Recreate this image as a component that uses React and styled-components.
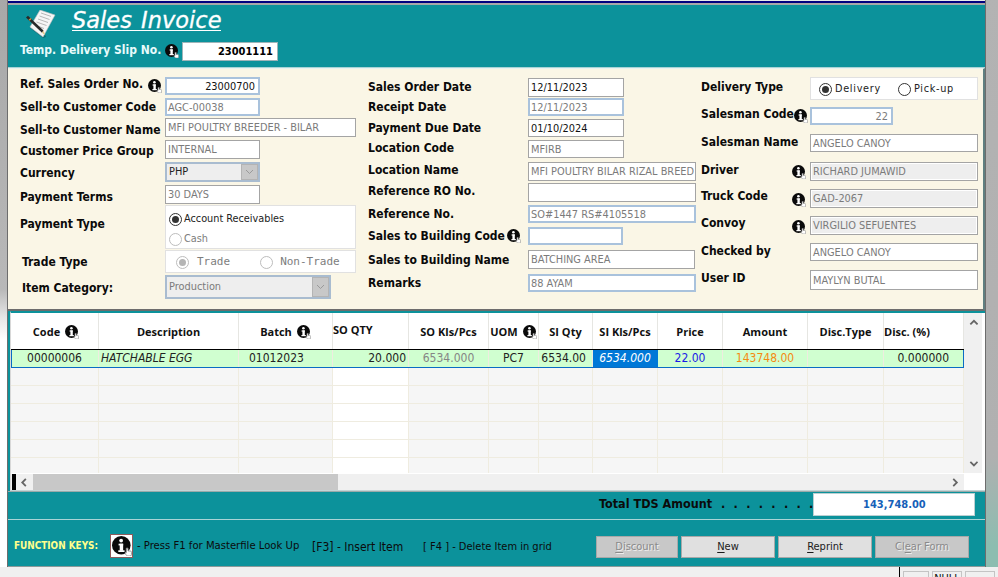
import React from 'react';
import styled, { createGlobalStyle } from 'styled-components';

const TEAL = '#0c929b';
const LABEL_FONT = `"DejaVu Sans Condensed", "DejaVu Sans", sans-serif`;
const TEXT_FONT = `"DejaVu Sans Condensed", "DejaVu Sans", sans-serif`;
const GRID_FONT = `"Open Sans", "Noto Sans", sans-serif`;

const GlobalStyle = createGlobalStyle`
  html, body {
    margin: 0;
    padding: 0;
    background: #f0f0f0;
    overflow: hidden;
  }
  * { box-sizing: border-box; }
`;

const Page = styled.div`
  width: 998px;
  height: 577px;
  display: flex;
  flex-direction: column;
  overflow: hidden;
  font-family: ${TEXT_FONT};
`;

const Desktop = styled.div`
  flex: 0 0 567px;
  display: flex;
  background: linear-gradient(170deg, #b4b4b4 0%, #b0b0b0 85%, #8cbdb0 97%);
`;

const LeftStrip = styled.div`
  flex: 0 0 7px;
  background: linear-gradient(180deg, #a8a8a8 0%, #b8b8b8 51%, #e6e6e6 56%, #ffffff 60%);
`;

const Win = styled.div`
  flex: 0 0 979px;
  display: flex;
  flex-direction: column;
  border-left: 1px solid #6d6d6d;
  border-right: 1px solid #6d6d6d;
  background: ${TEAL};
`;

const TitleStrip = styled.div`
  height: 5px;
  border-top: 1px solid #e8e8e8;
  border-bottom: 2px solid #a8a8a8;
  background: #00007f;
`;

const Header = styled.header`
  height: 63px;
  padding: 0 0 0 12px;
  border-bottom: 1px solid #a9d4d6;
`;

const TitleRow = styled.div`
  display: flex;
  align-items: flex-start;
  height: 36px;
  padding-left: 6px;
`;

const Title = styled.h1`
  margin: 2px 0 0 16px;
  font: oblique 400 22.5px/27px "DejaVu Sans", sans-serif;
  word-spacing: 2px;
  color: #fff;
  -webkit-text-stroke: 0.3px #fff;
  border-bottom: 1px solid #fff;
  height: 24px;
  white-space: nowrap;
`;

const SlipRow = styled.div`
  display: flex;
  align-items: center;
  height: 20px;
`;

const SlipLabel = styled.span`
  font: 700 12px/16px ${LABEL_FONT};
  color: #e8fbfb;
  width: 145px;
  margin-top: -3px;
  white-space: nowrap;
`;

const SlipValue = styled.div`
  width: 96px;
  height: 19px;
  margin-left: 3px;
  padding-right: 4px;
  background: #fff;
  border: 1px solid #9fb4b8;
  font: 700 11px/17px ${LABEL_FONT};
  color: #000;
  text-align: right;
`;

const FormPanel = styled.section`
  height: 243px;
  display: flex;
  padding-left: 12px;
  background: #faf6e6;
  border-top: 1px solid #e8f4f0;
  border-right: 2px solid #5f7f80;
  border-bottom: 2px solid #6d6d6d;
`;

const Column = styled.div`
  flex: 0 0 ${(p) => p.$w}px;
  padding-top: ${(p) => p.$top}px;
  margin-right: ${(p) => p.$gap || 0}px;
`;

const Row = styled.div`
  display: flex;
  align-items: flex-start;
  height: ${(p) => p.$h}px;
`;

const LabelBox = styled.div`
  flex: 0 0 ${(p) => p.$w}px;
  display: flex;
  justify-content: space-between;
  align-items: flex-start;
  padding-left: ${(p) => p.$x || 0}px;
  padding-right: ${(p) => p.$pad || 3}px;
  margin-top: ${(p) => p.$dy + 1}px;
`;

const Label = styled.span`
  font: 700 12px/16px ${LABEL_FONT};
  color: #0a0a0a;
  white-space: nowrap;
`;

const IconSlot = styled.span`
  display: flex;
  margin-top: ${(p) => p.$dy || 0}px;
`;

const Field = styled.div`
  flex: 0 0 ${(p) => p.$w}px;
  height: ${(p) => p.$h}px;
  padding: 1px ${(p) => (p.$right ? 3 : 0)}px 0 1px;
  background: ${(p) => (p.$shade ? '#eeeeee' : '#ffffff')};
  border: 2px solid ${(p) => (p.$blue ? '#a9c2dc' : '#fff')};
  outline: ${(p) => (p.$blue ? 'none' : '1px solid #a4a4a4')};
  outline-offset: -1px;
  font: 400 10.9px/${(p) => p.$h - 5}px ${TEXT_FONT};
  color: ${(p) => (p.$dark ? '#111' : '#7b7b7b')};
  text-align: ${(p) => (p.$right ? 'right' : 'left')};
  overflow: hidden;
  white-space: nowrap;
`;

const Combo = styled.div`
  flex: 0 0 ${(p) => p.$w}px;
  height: ${(p) => p.$h}px;
  display: flex;
  justify-content: space-between;
  padding-left: 2px;
  background: #eeeeee;
  border: 2px solid #a9bcd0;
  font: 400 10.9px/${(p) => p.$h - 4}px ${TEXT_FONT};
  color: ${(p) => (p.$dark ? '#222' : '#7b7b7b')};
`;

const ComboArrow = styled.span`
  width: 17px;
  display: flex;
  align-items: center;
  justify-content: center;
  background: #c8c8c8;
  border: 1px solid #b4b4b4;
`;

const OptionBox = styled.div`
  flex: 0 0 ${(p) => p.$w}px;
  height: ${(p) => p.$h}px;
  display: flex;
  flex-direction: ${(p) => (p.$stack ? 'column' : 'row')};
  padding: ${(p) => p.$pad};
  gap: ${(p) => p.$gap}px;
  background: #fff;
  border: 1px solid #e1e1e1;
`;

const Option = styled.span`
  display: flex;
  align-items: center;
  gap: ${(p) => p.$g || 3}px;
  height: 14px;
  font: 400 ${(p) => (p.$mono ? '11px' : '10.8px')}/14px ${(p) => (p.$mono ? '"DejaVu Sans Mono", monospace' : TEXT_FONT)};
  color: ${(p) => (p.$off ? '#7d7d7d' : '#222')};
  letter-spacing: ${(p) => (p.$spaced ? '0.7px' : '0')};
  white-space: nowrap;
`;

const Radio = styled.span`
  position: relative;
  flex: 0 0 13px;
  width: 13px;
  height: 13px;
  border-radius: 50%;
  background: #fff;
  border: 1px solid ${(p) => (p.$off ? '#bdbdbd' : '#333')};
  &::after {
    content: '';
    display: ${(p) => (p.$on ? 'block' : 'none')};
    position: absolute;
    inset: 2px;
    border-radius: 50%;
    background: ${(p) => (p.$off ? '#b5b5b5' : '#333')};
  }
`;

const GridFrame = styled.section`
  height: 180px;
  margin: 0 0 0 2px;
  width: 975px;
  padding: 0;
  border-top: 2px solid ${TEAL};
  background: #fff;
  display: grid;
  grid-template-columns: 953px 20px;
  grid-template-rows: 160px 17px;
  border-left: 1px solid #d8d8d8;
  border-bottom: 1px solid #c4d4d6;
`;

const GridBody = styled.div`
  overflow: hidden;
`;

const GridRow = styled.div`
  position: relative;
  display: grid;
  grid-template-columns: 88px 140px 94px 76px 80px 50px 54px 65px 65px 85px 76px 80px;
  height: ${(p) => p.$h}px;
  ${(p) => p.$active && `
    border-top: 1px solid #000;
    border-bottom: 1px solid #0a6cc4;
    &::after {
      content: '';
      position: absolute;
      inset: 0;
      border-left: 1px solid #0a6cc4;
      border-right: 1px solid #0a6cc4;
      pointer-events: none;
    }
  `}
`;

const HeadCell = styled.div`
  display: flex;
  align-items: center;
  justify-content: ${(p) => (p.$left ? 'flex-start' : 'center')};
  gap: 5px;
  padding-top: 2px;
  padding-bottom: ${(p) => (p.$raise ? 4 : 0)}px;
  padding-left: ${(p) => (p.$shift ? 3 : 0)}px;
  border-right: 1px solid #e6e6e2;
  font: 700 11px/14px ${GRID_FONT};
  color: #111;
  white-space: nowrap;
`;

const Cell = styled.div`
  padding: 0 ${(p) => p.$padR ?? 2}px 0 ${(p) => p.$pad ?? 2}px;
  border-right: 1px solid ${(p) => (p.$selected ? '#0078d7' : '#efece0')};
  border-bottom: ${(p) => (p.$active ? 'none' : '1px solid #efece0')};
  background: ${(p) => p.$bg};
  font: ${(p) => (p.$italic ? 'italic' : 'normal')} 400 12px/17px ${TEXT_FONT};
  color: ${(p) => p.$color || '#222'};
  text-align: ${(p) => p.$align || 'left'};
  white-space: nowrap;
  overflow: hidden;
`;

const VScroll = styled.div`
  display: flex;
  flex-direction: column;
  justify-content: space-between;
  align-items: center;
  padding: 6px 0 4px;
  width: 18px;
  background: #f0f0f0;
`;

const HScroll = styled.div`
  display: flex;
  align-items: center;
  background: #f0f0f0;
  border-top: 1px solid #fff;
`;

const ScrollMark = styled.span`
  flex: 0 0 4px;
  height: 16px;
  margin-left: 1px;
  background: #000;
`;

const ScrollArrow = styled.span`
  flex: 0 0 17px;
  display: flex;
  justify-content: center;
`;

const ScrollThumb = styled.span`
  flex: 0 0 305px;
  height: 16px;
  background: #c8c8c8;
`;

const ScrollTrack = styled.span`
  flex: 1;
`;

const TotalRow = styled.div`
  height: 29px;
  display: flex;
  align-items: flex-start;
  padding: 1px 0 0 591px;
  border-bottom: 1px solid #a9d4d6;
  border-top: 1px solid #9aa;
`;

const TotalLabel = styled.span`
  flex: 0 0 212px;
  display: flex;
  gap: 9px;
  margin-top: 2px;
  font: 700 12.5px/18px ${LABEL_FONT};
  color: #0b0b0b;
  white-space: pre;
`;

const TotalDots = styled.span`
  word-spacing: 4.4px;
`;

const TotalValue = styled.div`
  width: 162px;
  height: 23px;
  background: #fff;
  border: 1px solid #bcd0d2;
  font: 700 11px/21px ${LABEL_FONT};
  color: #1660b8;
  text-align: center;
`;

const Footer = styled.footer`
  flex: 1;
  display: flex;
  align-items: flex-start;
  padding: 14px 0 0 6px;
  border-bottom: 1px solid #8a9a9a;
`;

const KeysLabel = styled.span`
  flex: 0 0 96px;
  margin-top: 4px;
  font: 700 9.9px/16px ${LABEL_FONT};
  color: #ffff8c;
  white-space: nowrap;
`;

const KeyIconBox = styled.span`
  flex: 0 0 23px;
  height: 24px;
  display: flex;
  align-items: center;
  justify-content: center;
  background: #fff;
  border: 1px solid #8d5a5a;
`;

const KeyHint = styled.span`
  flex: 0 0 ${(p) => p.$w}px;
  margin: ${(p) => p.$top}px 0 0 ${(p) => p.$left}px;
  font: 400 ${(p) => p.$size}px/16px ${TEXT_FONT};
  color: #0b0b0b;
  white-space: nowrap;
`;

const Buttons = styled.div`
  display: flex;
  gap: 3px;
  margin: 2px 0 0 44px;
`;

const Btn = styled.button`
  width: ${(p) => p.$w}px;
  height: 22px;
  padding: 0;
  border: 1px solid #a8a8a8;
  background: ${(p) => (p.disabled ? '#c8c8c8' : '#e0e0e0')};
  font: 400 11px/18px ${TEXT_FONT};
  color: ${(p) => (p.disabled ? '#8a8a8a' : '#1a1a1a')};
  text-shadow: ${(p) => (p.disabled ? '1px 1px 0 #eee' : 'none')};
  u { text-underline-offset: 2px; }
`;

const StatusBar = styled.div`
  flex: 1;
  display: flex;
  gap: 3px;
  padding: 4px 0 0 899px;
  background: #f0f0f0;
`;

const StatusCell = styled.span`
  flex: 0 0 ${(p) => p.$w}px;
  height: 12px;
  border: 1px solid #c4c4c4;
  border-bottom: none;
  font: 400 11px/14px ${TEXT_FONT};
  color: #111;
  text-align: center;
  overflow: hidden;
`;

const StatusDivider = styled.span`
  flex: 0 0 1px;
  height: 10px;
  margin-top: -4px;
  background: #000;
`;

function InfoIcon({ size = 14 }) {
  return (
    <svg width={size} height={size} viewBox="0 0 14 14" style={{ flex: 'none' }}>
      <circle cx="6.500" cy="6.500" r="6.500" fill="#0a0a0a" />
      <circle cx="6.400" cy="3.200" r="1.300" fill="#fff" />
      <rect x="4.600" y="5.400" width="3.200" height="1.200" fill="#fff" />
      <rect x="5.400" y="5.400" width="2.400" height="5" fill="#fff" />
      <rect x="4.400" y="10" width="4.400" height="1.200" fill="#fff" />
      <path d="M10 8.500h1.200v2h1.600q.8 0 .8 .9v1.600q0 1-1 1h-1.600q-.6 0-1-.6l-1-1.500 .6-.5 .4 .3z" fill="#fff" stroke="#8a8a8a" strokeWidth=".6" />
    </svg>
  );
}

function ChevronIcon() {
  return (
    <svg width="9" height="6" viewBox="0 0 9 6">
      <path d="M1 1l3.500 3.500L8 1" fill="none" stroke="#9a9a9a" strokeWidth="1" />
    </svg>
  );
}

function ArrowIcon({ dir }) {
  const paths = {
    up: 'M1 6l4-4 4 4',
    down: 'M1 2l4 4 4-4',
    left: 'M6 1L2 5l4 4',
    right: 'M2 1l4 4-4 4',
  };
  return (
    <svg width="9" height="9" viewBox="0 0 9 10">
      <path d={paths[dir]} fill="none" stroke="#666" strokeWidth="2" />
    </svg>
  );
}

function InvoiceLogo() {
  return (
    <svg width="30" height="30" viewBox="0 0 30 30" style={{ marginTop: 5, flex: 'none' }}>
      <path d="M4 18l13 10 3-1 -3-8z" fill="#0a5f66" opacity=".7" />
      <path d="M14 0l15 5-12 22-13-10z" fill="#f6f6f6" stroke="#bdbdbd" strokeWidth=".6" />
      <path d="M15 3l10 3.400M13.500 6l10 3.500M12 9l10 3.500M10.500 12l10 3.500M9 15l9 3.500" stroke="#a8a8a8" strokeWidth=".8" />
      <path d="M0 7.500l2-1.800 15.500 14.800-1.500 2.200z" fill="#2a2a2a" />
      <path d="M2.600 9.800l2-1.800 1 1-2 1.800z" fill="#c79a3c" />
      <path d="M16 22.700l1.500-2.200 1.800 4.700z" fill="#e4c98a" />
    </svg>
  );
}

const leftRows = [
  { label: 'Ref. Sales Order No.', h: 21, dy: -2, fh: 18, w: 95, value: '23000700', right: true, dark: true, blue: true, icon: true, iconDy: 3 },
  { label: 'Sell-to Customer Code', h: 20, dy: 0, fh: 18, w: 95, value: 'AGC-00038', blue: true },
  { label: 'Sell-to Customer Name', h: 22, dy: 3, fh: 19, w: 191, value: 'MFI POULTRY BREEDER - BILAR' },
  { label: 'Customer Price Group', h: 22, dy: 2, fh: 19, w: 95, value: 'INTERNAL' },
  { label: 'Currency', h: 23, dy: 2, fh: 20, w: 95, value: 'PHP', combo: true, dark: true },
  { label: 'Payment Terms', h: 20, dy: 3, fh: 19, w: 95, value: '30 DAYS' },
];

const midRows = [
  { label: 'Sales Order Date', h: 20, dy: 0, fh: 19, w: 96, value: '12/11/2023', dark: true },
  { label: 'Receipt Date', h: 21, dy: 0, fh: 18, w: 96, value: '12/11/2023', blue: true },
  { label: 'Payment Due Date', h: 21, dy: 0, fh: 18, w: 96, value: '01/10/2024', dark: true },
  { label: 'Location Code', h: 22, dy: -1, fh: 18, w: 96, value: 'MFIRB' },
  { label: 'Location Name', h: 21, dy: -1, fh: 19, w: 168, value: 'MFI POULTRY BILAR RIZAL BREED' },
  { label: 'Reference RO No.', h: 22, dy: -1, fh: 19, w: 168, value: '' },
  { label: 'Reference No.', h: 22, dy: 0, fh: 18, w: 168, value: 'SO#1447 RS#4105518', blue: true },
  { label: 'Sales to Building Code', x: -1, h: 23, dy: 0, fh: 18, w: 95, value: '', blue: true, icon: true, iconDy: 1, pad: 7 },
  { label: 'Sales to Building Name', h: 24, dy: 1, fh: 19, w: 167, value: 'BATCHING AREA' },
  { label: 'Remarks', h: 20, dy: 0, fh: 18, w: 168, value: '88 AYAM', blue: true },
];

const rightRows = [
  { label: 'Salesman Code', h: 27, dy: -2, fh: 18, w: 83, value: '22', right: true, blue: true, icon: true, iconDy: 3, pad: 2 },
  { label: 'Salesman Name', h: 28, dy: -1, fh: 18, w: 168, value: 'ANGELO CANOY' },
  { label: 'Driver', h: 27, dy: -1, fh: 19, w: 168, value: 'RICHARD JUMAWID', shade: true, icon: true, iconDy: 3, pad: 4 },
  { label: 'Truck Code', h: 27, dy: -2, fh: 19, w: 168, value: 'GAD-2067', shade: true, icon: true, iconDy: 5, pad: 4 },
  { label: 'Convoy', h: 27, dy: -2, fh: 19, w: 168, value: 'VIRGILIO SEFUENTES', shade: true, icon: true, iconDy: 5, pad: 4 },
  { label: 'Checked by', h: 27, dy: -1, fh: 18, w: 168, value: 'ANGELO CANOY' },
  { label: 'User ID', h: 20, dy: -1, fh: 20, w: 168, value: 'MAYLYN BUTAL' },
];

const headers = [
  { text: 'Code', icon: true, shift: true },
  { text: 'Description' },
  { text: 'Batch', icon: true },
  { text: 'SO QTY', left: true, raise: true },
  { text: 'SO Kls/Pcs' },
  { text: 'UOM', icon: true },
  { text: 'SI Qty' },
  { text: 'SI Kls/Pcs' },
  { text: 'Price' },
  { text: 'Amount' },
  { text: 'Disc.Type' },
  { text: 'Disc. (%)', left: true },
];

const GREEN = '#d0ffd0';
const activeCells = [
  { text: '00000006', align: 'center' },
  { text: 'HATCHABLE EGG', italic: true },
  { text: '01012023', pad: 10 },
  { text: '20.000', align: 'right' },
  { text: '6534.000', align: 'center', color: '#858585' },
  { text: 'PC7', align: 'center' },
  { text: '6534.00', align: 'right', padR: 6 },
  { text: '6534.000', italic: true, align: 'center', color: '#fff', bg: '#0078d7', selected: true },
  { text: '22.00', align: 'center', color: '#1a1ae6' },
  { text: '143748.00', align: 'center', color: '#f58a12' },
  { text: '' },
  { text: '0.000000', align: 'right', padR: 14 },
];

function FormRow({ row, labelWidth }) {
  const Input = row.combo ? Combo : Field;
  return (
    <Row $h={row.h}>
      <LabelBox $w={labelWidth} $dy={row.dy} $x={row.x} $pad={row.pad}>
        <Label>{row.label}</Label>
        {row.icon && <IconSlot $dy={row.iconDy}><InfoIcon /></IconSlot>}
      </LabelBox>
      <Input
        $w={row.w}
        $h={row.fh}
        $right={row.right}
        $dark={row.dark}
        $blue={row.blue}
        $shade={row.shade}
      >
        {row.value}
        {row.combo && <ComboArrow><ChevronIcon /></ComboArrow>}
      </Input>
    </Row>
  );
}

function ItemGrid() {
  return (
    <GridFrame>
      <GridBody>
        <GridRow $h={36}>
          {headers.map((h) => (
            <HeadCell key={h.text} $left={h.left} $raise={h.raise} $shift={h.shift}>
              {h.text}
              {h.icon && <InfoIcon />}
            </HeadCell>
          ))}
        </GridRow>
        <GridRow $h={19} $active>
          {activeCells.map((c, i) => (
            <Cell
              key={i}
              $active
              $italic={c.italic}
              $align={c.align}
              $pad={c.pad}
              $padR={c.padR}
              $color={c.color}
              $bg={c.bg || GREEN}
              $selected={c.selected}
            >
              {c.text}
            </Cell>
          ))}
        </GridRow>
        {[0, 1, 2, 3, 4, 5].map((r) => (
          <GridRow key={r} $h={18}>
            {headers.map((h, i) => (
              <Cell key={h.text} $bg={i === 3 ? '#ffffff' : '#f6f6f6'} />
            ))}
          </GridRow>
        ))}
      </GridBody>
      <VScroll>
        <ArrowIcon dir="up" />
        <ArrowIcon dir="down" />
      </VScroll>
      <HScroll>
        <ScrollMark />
        <ScrollArrow><ArrowIcon dir="left" /></ScrollArrow>
        <ScrollThumb />
        <ScrollTrack />
        <ScrollArrow><ArrowIcon dir="right" /></ScrollArrow>
      </HScroll>
    </GridFrame>
  );
}

export default function App() {
  return (
    <Page>
      <GlobalStyle />
      <Desktop>
        <LeftStrip />
        <Win>
          <TitleStrip />
          <Header>
            <TitleRow>
              <InvoiceLogo />
              <Title>Sales Invoice</Title>
            </TitleRow>
            <SlipRow>
              <SlipLabel>Temp. Delivery Slip No.</SlipLabel>
              <InfoIcon />
              <SlipValue>23001111</SlipValue>
            </SlipRow>
          </Header>
          <FormPanel>
            <Column $w={336} $top={8} $gap={12}>
              {leftRows.map((row) => (
                <FormRow key={row.label} row={row} labelWidth={145} />
              ))}
              <Row $h={45}>
                <LabelBox $w={145} $dy={10}>
                  <Label>Payment Type</Label>
                </LabelBox>
                <OptionBox $w={191} $h={44} $stack $pad="6px 0 0 3px" $gap={6}>
                  <Option $g={2}><Radio $on />Account Receivables</Option>
                  <Option $off $g={2}><Radio $off />Cash</Option>
                </OptionBox>
              </Row>
              <Row $h={25}>
                <LabelBox $w={145} $dy={3} $x={2}>
                  <Label>Trade Type</Label>
                </LabelBox>
                <OptionBox $w={191} $h={23} $pad="4px 0 0 10px" $gap={30}>
                  <Option $off $mono $g={8}><Radio $off $on />Trade</Option>
                  <Option $off $mono $g={7}><Radio $off />Non-Trade</Option>
                </OptionBox>
              </Row>
              <Row $h={24}>
                <LabelBox $w={145} $dy={4} $x={2}>
                  <Label>Item Category:</Label>
                </LabelBox>
                <Combo $w={166} $h={24}>
                  Production
                  <ComboArrow><ChevronIcon /></ComboArrow>
                </Combo>
              </Row>
            </Column>
            <Column $w={328} $top={9} $gap={5}>
              {midRows.map((row) => (
                <FormRow key={row.label} row={row} labelWidth={160} />
              ))}
            </Column>
            <Column $w={277} $top={8}>
              <Row $h={30}>
                <LabelBox $w={109} $dy={1}>
                  <Label>Delivery Type</Label>
                </LabelBox>
                <OptionBox $w={168} $h={23} $pad="4px 0 0 8px" $gap={17}>
                  <Option $spaced><Radio $on />Delivery</Option>
                  <Option $spaced><Radio />Pick-up</Option>
                </OptionBox>
              </Row>
              {rightRows.map((row) => (
                <FormRow key={row.label} row={row} labelWidth={109} />
              ))}
            </Column>
          </FormPanel>
          <ItemGrid />
          <TotalRow>
            <TotalLabel>
              Total TDS Amount
              <TotalDots>. . . . . . . .</TotalDots>
            </TotalLabel>
            <TotalValue>143,748.00</TotalValue>
          </TotalRow>
          <Footer>
            <KeysLabel>FUNCTION KEYS:</KeysLabel>
            <KeyIconBox><InfoIcon size={20} /></KeyIconBox>
            <KeyHint $w={163} $left={4} $top={4} $size={11.2}>- Press F1 for Masterfile Look Up</KeyHint>
            <KeyHint $w={92} $left={12} $top={5} $size={12}>[F3] - Insert Item</KeyHint>
            <KeyHint $w={129} $left={19} $top={5} $size={11}>[ F4 ] - Delete Item in grid</KeyHint>
            <Buttons>
              <Btn $w={82} disabled><u>D</u>iscount</Btn>
              <Btn $w={94}><u>N</u>ew</Btn>
              <Btn $w={94}><u>R</u>eprint</Btn>
              <Btn $w={94} disabled>Cl<u>e</u>ar Form</Btn>
            </Buttons>
          </Footer>
        </Win>
      </Desktop>
      <StatusBar>
        <StatusDivider />
        <StatusCell $w={26} />
        <StatusCell $w={30}>NULL</StatusCell>
        <StatusCell $w={30} />
      </StatusBar>
    </Page>
  );
}
